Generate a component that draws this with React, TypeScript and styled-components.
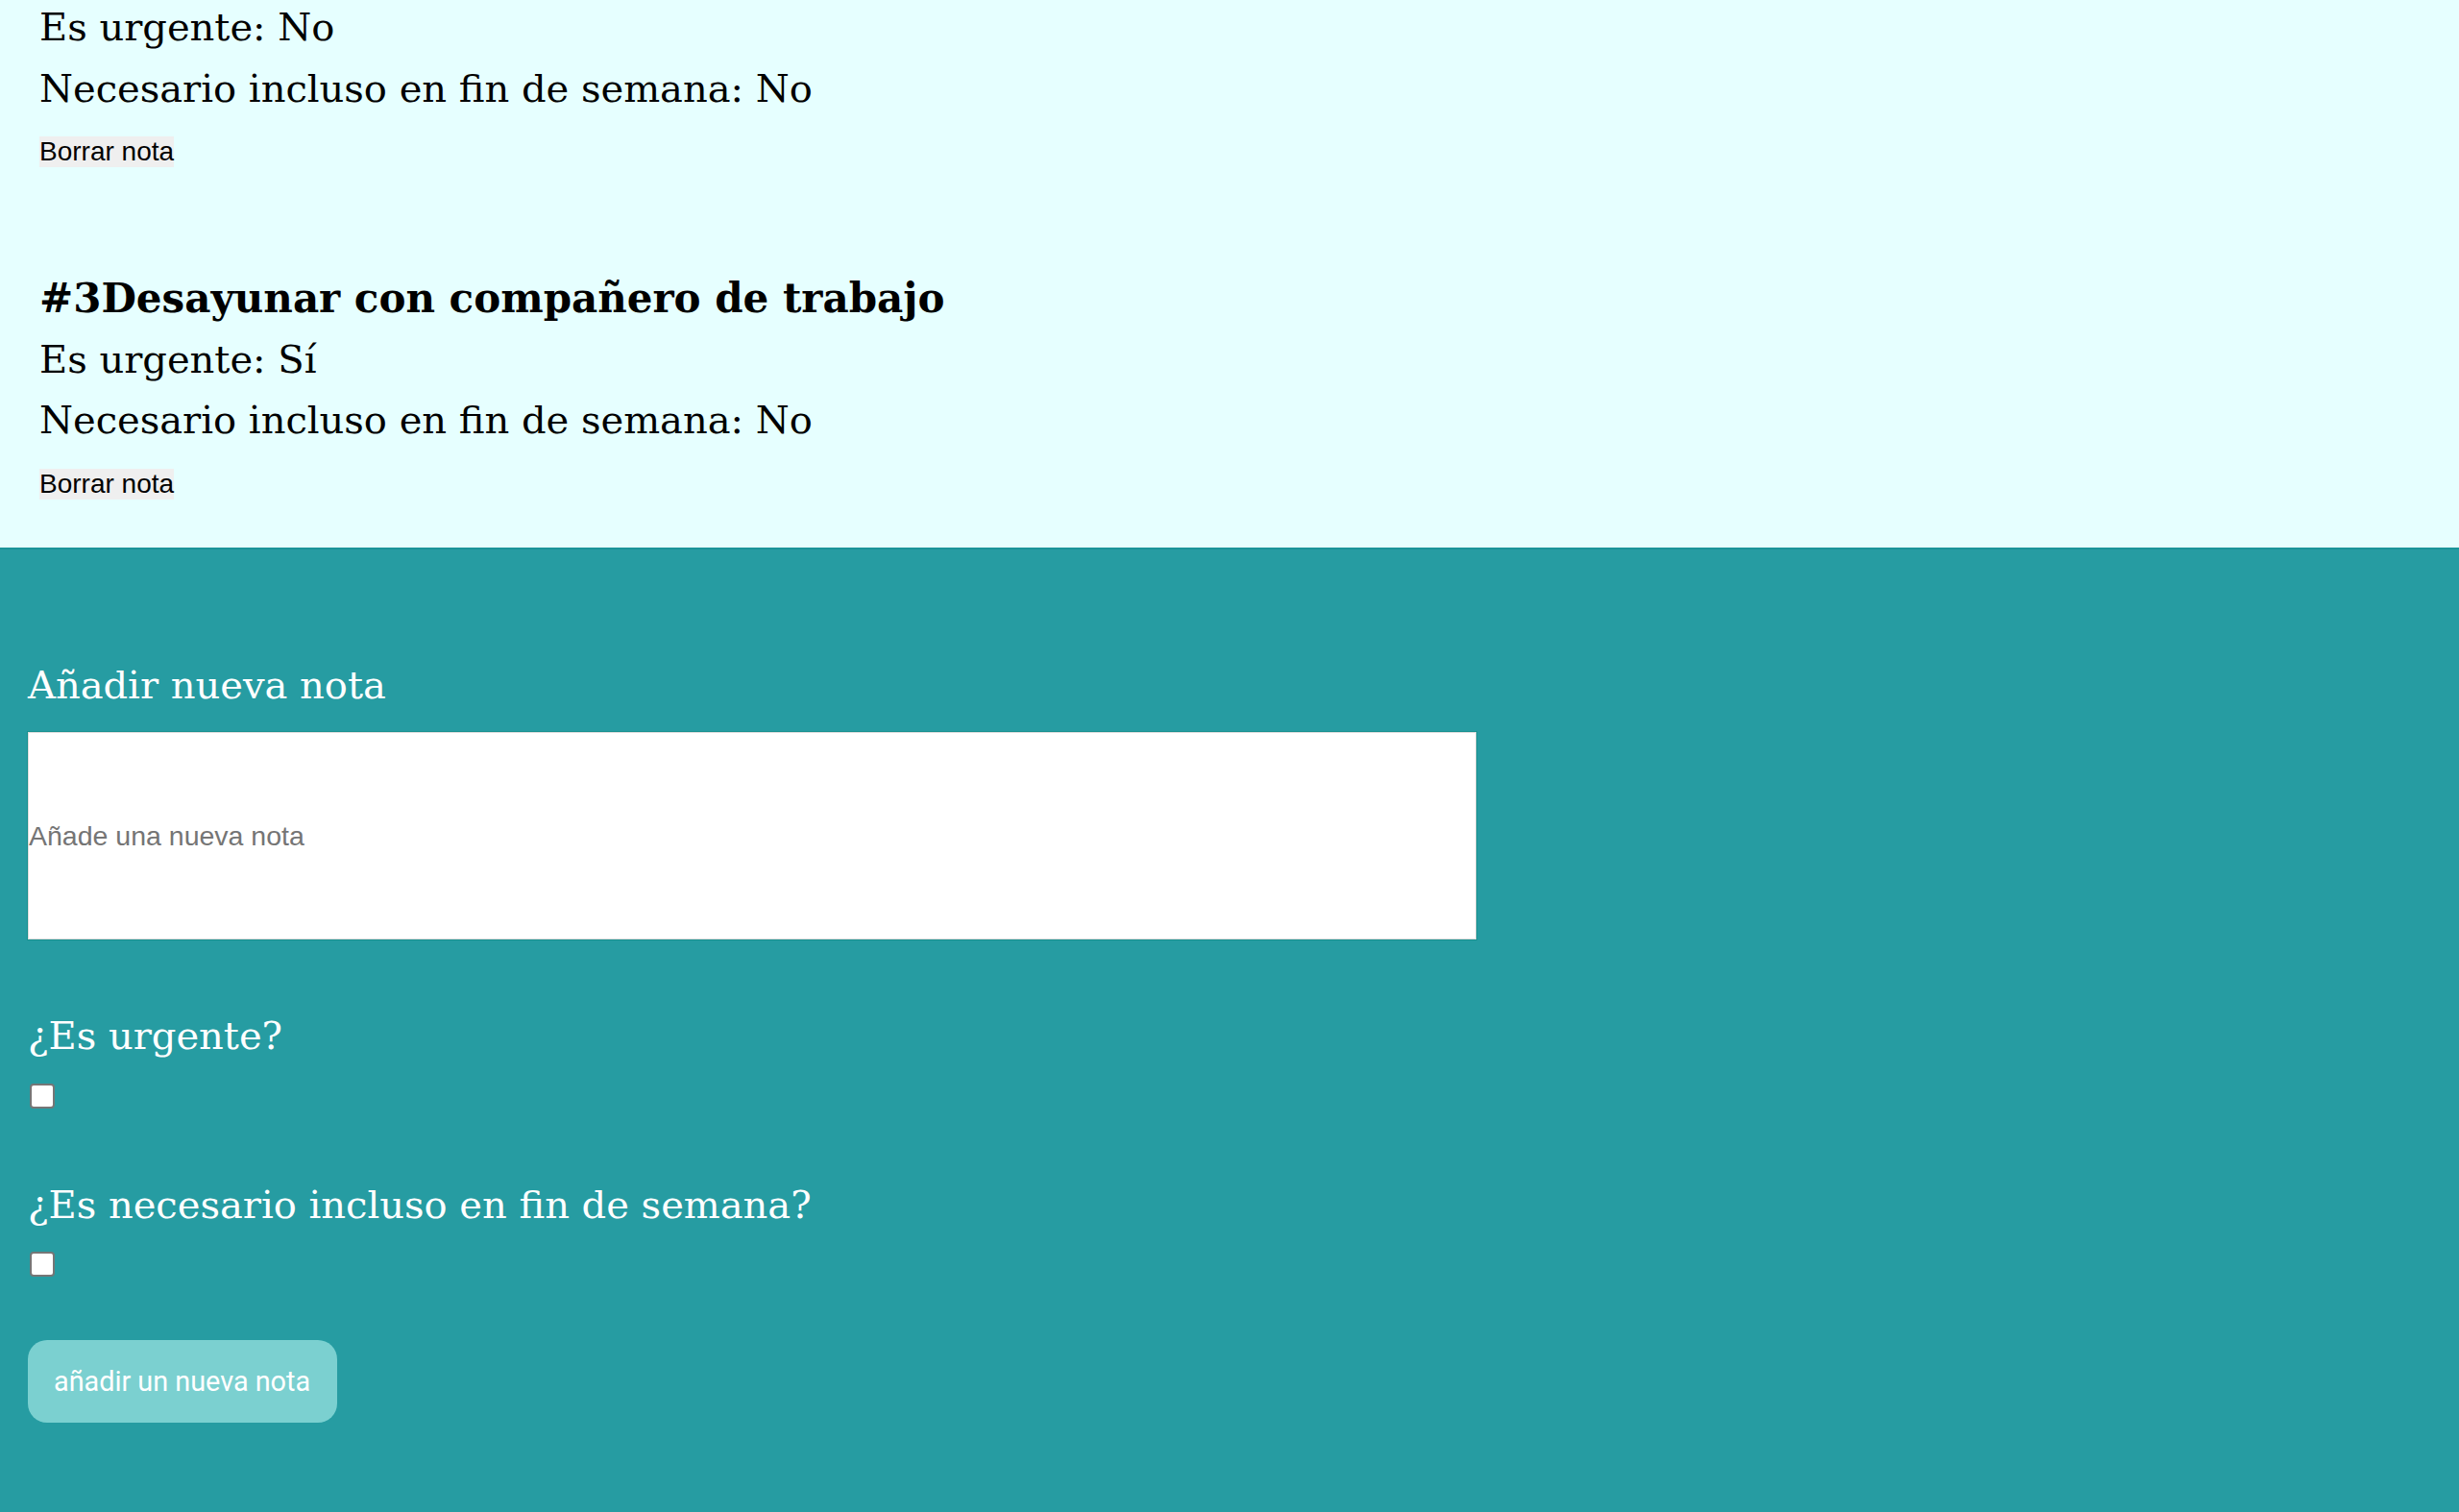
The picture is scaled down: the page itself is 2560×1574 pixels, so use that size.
import React from 'react';
import styled, { createGlobalStyle } from 'styled-components';

const GlobalStyle = createGlobalStyle`
  html, body {
    margin: 0;
    padding: 0;
  }
  body {
    background: #269ca2;
    font-family: "DejaVu Serif", "Liberation Serif", serif;
  }
`;

const Page = styled.div`
  display: flex;
  flex-direction: column;
  min-height: 1574px;
`;

const NotesSection = styled.section`
  background: #e6ffff;
  padding: 0 41px 50px;
`;

const NoteList = styled.div`
  display: flex;
  flex-direction: column;
  gap: 105px;
  margin-top: -3px;
`;

const Note = styled.article`
  display: flex;
  flex-direction: column;
  align-items: flex-start;
`;

const NoteTitle = styled.h2`
  margin: 0;
  font-size: 42px;
  font-weight: 700;
  line-height: 63.5px;
  color: #000;
`;

const NoteLine = styled.p`
  margin: 0;
  font-size: 40px;
  line-height: 63.5px;
  color: #000;
`;

const DeleteButton = styled.button`
  margin-top: 18px;
  padding: 0;
  border: none;
  background: #efefef;
  color: #000;
  font-family: "Liberation Sans", Arial, sans-serif;
  font-size: 28px;
  line-height: normal;
  cursor: pointer;
`;

const FormSection = styled.form`
  flex: 1;
  display: flex;
  flex-direction: column;
  align-items: flex-start;
  background: #269ca2;
  border-top: 2px solid #1a9499;
  padding: 110px 29px 91px;
`;

const FormTitle = styled.h2`
  margin: 0;
  font-size: 40px;
  font-weight: 400;
  line-height: 63.5px;
  color: #fff;
`;

const NoteInput = styled.input`
  box-sizing: border-box;
  margin-top: 17px;
  width: 1508px;
  height: 216px;
  padding: 0;
  background: #fff;
  border: 1px solid #dcdcdc;
  box-shadow: 0 0 0 1px #17918f;
  font-family: "Liberation Sans", Arial, sans-serif;
  font-size: 28.5px;
  color: #000;
  outline: none;

  &::placeholder {
    color: #757575;
  }
`;

const Field = styled.div`
  display: flex;
  flex-direction: column;
  align-items: flex-start;
  margin-top: 69px;
`;

const FieldLabel = styled.label`
  font-size: 40px;
  line-height: 63.5px;
  color: #fff;
`;

const Checkbox = styled.input`
  appearance: none;
  box-sizing: border-box;
  display: block;
  width: 26px;
  height: 26px;
  margin: 17px 0 0 2px;
  background: #fff;
  border: 2px solid #767676;
  border-radius: 4px;
`;

const SubmitButton = styled.button`
  margin-top: 66px;
  padding: 0 28px 0 27px;
  height: 86px;
  border: none;
  border-radius: 20px;
  background: #7bd0d0;
  color: #fff;
  font-family: Roboto, "Liberation Sans", sans-serif;
  font-size: 28.8px;
  cursor: pointer;
`;

export default function App() {
  return (
    <>
      <GlobalStyle />
      <Page>
        <NotesSection>
          <NoteList>
            <Note>
              <NoteLine>Es urgente: No</NoteLine>
              <NoteLine>Necesario incluso en fin de semana: No</NoteLine>
              <DeleteButton type="button">Borrar nota</DeleteButton>
            </Note>
            <Note>
              <NoteTitle>#3Desayunar con compañero de trabajo</NoteTitle>
              <NoteLine>Es urgente: Sí</NoteLine>
              <NoteLine>Necesario incluso en fin de semana: No</NoteLine>
              <DeleteButton type="button">Borrar nota</DeleteButton>
            </Note>
          </NoteList>
        </NotesSection>
        <FormSection onSubmit={(e) => e.preventDefault()}>
          <FormTitle>Añadir nueva nota</FormTitle>
          <NoteInput type="text" placeholder="Añade una nueva nota" />
          <Field>
            <FieldLabel htmlFor="urgent">¿Es urgente?</FieldLabel>
            <Checkbox id="urgent" type="checkbox" />
          </Field>
          <Field>
            <FieldLabel htmlFor="weekend">¿Es necesario incluso en fin de semana?</FieldLabel>
            <Checkbox id="weekend" type="checkbox" />
          </Field>
          <SubmitButton type="submit">añadir un nueva nota</SubmitButton>
        </FormSection>
      </Page>
    </>
  );
}
